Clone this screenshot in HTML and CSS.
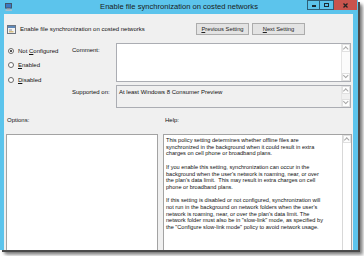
FILE: index.html
```html
<!DOCTYPE html>
<html>
<head>
<meta charset="utf-8">
<link rel="stylesheet" href="styles.css">
</head>
<body>
<div class="window">
  <div class="titlebar">
    <div class="app-icon">
      <svg width="8" height="8" viewBox="0 0 8 8"><rect x="0.5" y="0.5" width="6" height="4.5" fill="#3b78c4" stroke="#44556a" stroke-width="1"/><rect x="2" y="5" width="3" height="1.5" fill="#8a8f99"/><rect x="0.5" y="6.5" width="6.5" height="1.3" fill="#b9bec6"/></svg>
    </div>
    <div class="title">Enable file synchronization on costed networks</div>
    <div class="controls">
      <div class="ctl ctl-min"><span class="min-bar"></span></div>
      <div class="ctl ctl-max"><span class="max-box"></span></div>
      <div class="ctl ctl-close">
        <svg width="5" height="5" viewBox="0 0 5 5"><path d="M0.5 0.5 L4.5 4.5 M4.5 0.5 L0.5 4.5" stroke="#222" stroke-width="1.3"/></svg>
      </div>
    </div>
  </div>
  <div class="body">
    <div class="header">
      <div class="policy">
        <svg class="policy-icon" width="9" height="9" viewBox="0 0 9 9"><rect x="0.5" y="0.5" width="8" height="8" fill="#f4f4f4" stroke="#6e7580"/><rect x="1" y="1" width="7" height="2" fill="#5f88b8"/><rect x="2" y="4.5" width="3" height="1" fill="#8b929c"/><rect x="2" y="6.3" width="4.5" height="1" fill="#c9a64e"/></svg>
        <span>Enable file synchronization on costed networks</span>
      </div>
      <div class="nav">
        <button class="btn"><u>P</u>revious Setting</button>
        <button class="btn"><u>N</u>ext Setting</button>
      </div>
    </div>
    <div class="settings">
      <div class="radios">
        <div class="radio"><span class="dot on"></span><span>Not <u>C</u>onfigured</span></div>
        <div class="radio"><span class="dot"></span><span><u>E</u>nabled</span></div>
        <div class="radio"><span class="dot"></span><span><u>D</u>isabled</span></div>
      </div>
      <div class="label lbl-comment">Comment:</div>
      <div class="box comment">
        <div class="text"></div>
        <div class="scroll"><span class="arr up"></span><span class="track"></span><span class="arr down"></span></div>
      </div>
      <div class="label lbl-supported">Supported on:</div>
      <div class="box supported">
        <div class="text">At least Windows 8 Consumer Preview</div>
        <div class="scroll"><span class="arr up"></span><span class="track"></span><span class="arr down"></span></div>
      </div>
    </div>
    <div class="section-labels">
      <div class="opt-label">Options:</div>
      <div class="help-label">Help:</div>
    </div>
    <div class="panels">
      <div class="panel options"></div>
      <div class="panel help">
        <div class="help-text">This policy setting determines whether offline files are<br>synchronized in the background when it could result in extra<br>charges on cell phone or broadband plans.<br><br>If you enable this setting, synchronization can occur in the<br>background when the user's network is roaming, near, or over<br>the plan's data limit.&nbsp; This may result in extra charges on cell<br>phone or broadband plans.<br><br>If this setting is disabled or not configured, synchronization will<br>not run in the background on network folders when the user's<br>network is roaming, near, or over the plan's data limit. The<br>network folder must also be in "slow-link" mode, as specified by<br>the "Configure slow-link mode" policy to avoid network usage.</div>
        <div class="scroll"><span class="arr up"></span><span class="track"></span></div>
      </div>
    </div>
  </div>
</div>
</body>
</html>
```

FILE: styles.css
```css
* { box-sizing: border-box; }
html, body { margin: 0; padding: 0; }
body {
  width: 364px;
  height: 256px;
  background: #ffffff;
  font-family: "Liberation Sans", Arial, sans-serif;
  font-size: 6px;
  color: #111;
  overflow: hidden;
}
.window {
  width: 358px;
  height: 250px;
  background: #5cc4ec;
  display: flex;
  flex-direction: column;
  overflow: hidden;
  box-shadow: 2px 2px 0 #4a4a4a, 4px 4px 3px rgba(0,0,0,0.45), 6px 6px 3px rgba(0,0,0,0.15);
}
.titlebar {
  height: 14px;
  flex: none;
  display: grid;
  grid-template-columns: 1fr auto 1fr;
  align-items: start;
}
.app-icon { padding: 3px 0 0 5px; height: 14px; }
.app-icon svg { display: block; }
.title {
  font-size: 7.6px;
  line-height: 14px;
  color: #1a1a1a;
  white-space: nowrap;
}
.controls {
  justify-self: end;
  display: flex;
  margin-right: 1px;
}
.ctl {
  height: 10px;
  display: flex;
  align-items: center;
  justify-content: center;
}
.ctl-min, .ctl-max {
  width: 13px;
  border: 1px solid #2e5f77;
  background: #5cc4ec;
}
.ctl-max { width: 14px; border-left: none; }
.min-bar { width: 4px; height: 1.5px; background: #1b2a33; margin-top: 2px; }
.max-box { width: 5px; height: 4px; border: 1px solid #1b2a33; border-top-width: 1.5px; }
.ctl-close { width: 23px; background: #c9544d; }
.ctl-close svg { display: block; }

.body {
  flex: 1;
  margin: 0 5px 0 4px;
  background: #f0f0f0;
  display: flex;
  flex-direction: column;
  min-height: 0;
}
.header {
  display: flex;
  justify-content: space-between;
  align-items: center;
  padding: 9px 48px 0 3px;
}
.policy { display: flex; align-items: center; gap: 4px; height: 12px; }
.policy-icon { display: block; }
.policy span { font-size: 6px; white-space: nowrap; }
.nav { display: flex; gap: 3px; }
.btn {
  width: 53px;
  height: 12px;
  padding: 0;
  margin: 0;
  font-family: inherit;
  font-size: 5.8px;
  color: #222;
  background: #e3e3e3;
  border: 1px solid #acacac;
  border-radius: 0;
}
.settings {
  display: grid;
  grid-template-columns: 68px 44px 235px;
  grid-template-rows: 39px 23px;
  row-gap: 3px;
  margin-top: 8px;
}
.radios {
  grid-row: 1 / span 2;
  grid-column: 1;
  padding: 0.5px 0 0 4px;
}
.radio {
  height: 14.6px;
  display: flex;
  align-items: center;
  gap: 4px;
  white-space: nowrap;
}
.dot {
  width: 6px;
  height: 6px;
  border-radius: 50%;
  border: 1px solid #6a6a6a;
  background: #fff;
  display: flex;
  align-items: center;
  justify-content: center;
}
.dot.on::after {
  content: "";
  width: 2.5px;
  height: 2.5px;
  border-radius: 50%;
  background: #1d1d1d;
}
.label { padding-top: 4px; white-space: nowrap; }
.lbl-comment { grid-column: 2; grid-row: 1; }
.lbl-supported { grid-column: 2; grid-row: 2; }
.box {
  border: 1px solid #abadb3;
  display: flex;
}
.comment { grid-column: 3; grid-row: 1; background: #fff; }
.supported { grid-column: 3; grid-row: 2; background: #f0f0f0; }
.box .text { flex: 1; padding: 3px 0 0 2px; white-space: nowrap; }
.scroll {
  width: 9px;
  flex: none;
  display: flex;
  flex-direction: column;
  border-left: 1px solid #e4e4e4;
  background: #fbfbfb;
}
.supported .scroll { background: #f0f0f0; }
.arr {
  height: 8px;
  flex: none;
  display: flex;
  align-items: center;
  justify-content: center;
  border: 1px solid #e0e0e0;
  background: #fdfdfd;
}
.arr::after {
  content: "";
  width: 2.5px;
  height: 2.5px;
  border-left: 1px solid #a8a8a8;
  border-top: 1px solid #a8a8a8;
}
.arr.up::after { transform: translateY(1px) rotate(45deg); }
.arr.down::after { transform: translateY(-1px) rotate(225deg); }
.track { flex: 1; }
.section-labels {
  display: flex;
  margin-top: 8px;
  height: 8px;
  align-items: center;
  padding-left: 3px;
}
.opt-label { width: 158px; }
.panels {
  flex: 1;
  display: flex;
  gap: 5px;
  padding: 0 1px 0 2px;
  margin-top: 10px;
  min-height: 0;
}
.panel {
  height: 130px;
  border: 1px solid #a3a3a3;
  border-bottom: none;
  background: #fff;
}
.options { width: 152px; }
.help { flex: 1; display: flex; }
.help-text {
  flex: 1;
  padding: 2px 0 0 2px;
  font-size: 5.6px;
  line-height: 6.7px;
  white-space: nowrap;
  overflow: hidden;
  color: #111;
}
.help .scroll { border-left: 1px solid #d8d8d8; background: #fff; }
```
